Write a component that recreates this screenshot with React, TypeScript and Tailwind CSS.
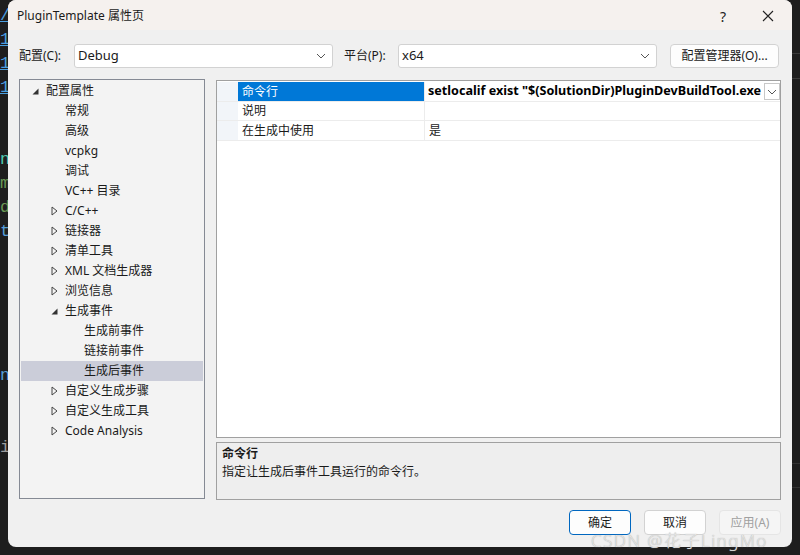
const font = "font-['Noto_Sans','Noto_Sans_CJK_SC',sans-serif]";

type Node = { label: string; level: 0 | 1 | 2; arrow?: "open" | "closed"; selected?: boolean };

const tree: Node[] = [
  { label: "配置属性", level: 0, arrow: "open" },
  { label: "常规", level: 1 },
  { label: "高级", level: 1 },
  { label: "vcpkg", level: 1 },
  { label: "调试", level: 1 },
  { label: "VC++ 目录", level: 1 },
  { label: "C/C++", level: 1, arrow: "closed" },
  { label: "链接器", level: 1, arrow: "closed" },
  { label: "清单工具", level: 1, arrow: "closed" },
  { label: "XML 文档生成器", level: 1, arrow: "closed" },
  { label: "浏览信息", level: 1, arrow: "closed" },
  { label: "生成事件", level: 1, arrow: "open" },
  { label: "生成前事件", level: 2 },
  { label: "链接前事件", level: 2 },
  { label: "生成后事件", level: 2, selected: true },
  { label: "自定义生成步骤", level: 1, arrow: "closed" },
  { label: "自定义生成工具", level: 1, arrow: "closed" },
  { label: "Code Analysis", level: 1, arrow: "closed" },
];

const indent = ["pl-[11px]", "pl-[30px]", "pl-[49px]"];

// bits of the code editor that show behind the dialog
const code: { ch: string; cls: string }[] = [
  { ch: "/", cls: "text-[#4a9fe0] underline" },
  { ch: "1", cls: "text-[#4a9fe0] underline" },
  { ch: "1", cls: "text-[#4a9fe0] underline" },
  { ch: "1", cls: "text-[#4a9fe0] underline" },
  { ch: " ", cls: "" },
  { ch: " ", cls: "" },
  { ch: "n", cls: "text-[#4ec9b0]" },
  { ch: "m", cls: "text-[#6a9955]" },
  { ch: "d", cls: "text-[#6a9955]" },
  { ch: "t", cls: "text-[#569cd6]" },
  { ch: " ", cls: "" },
  { ch: " ", cls: "" },
  { ch: " ", cls: "" },
  { ch: " ", cls: "" },
  { ch: " ", cls: "" },
  { ch: "n", cls: "text-[#569cd6]" },
  { ch: " ", cls: "" },
  { ch: " ", cls: "" },
  { ch: "i", cls: "text-[#9d9d9d]" },
];

function Arrow({ kind }: { kind?: "open" | "closed" }) {
  return (
    <span className="flex h-[20px] w-[14px] shrink-0 items-center">
      {kind === "open" && (
        <svg width="7" height="7" viewBox="0 0 7 7">
          <path d="M6.5 0.5 L6.5 6.5 L0.5 6.5 Z" fill="#333" />
        </svg>
      )}
      {kind === "closed" && (
        <svg width="7" height="10" viewBox="0 0 7 10">
          <path d="M1 1 L6 5 L1 9 Z" fill="none" stroke="#444" strokeWidth="1" />
        </svg>
      )}
    </span>
  );
}

function Chevron() {
  return (
    <svg width="10" height="6" viewBox="0 0 10 6">
      <path d="M1 1 L5 5 L9 1" fill="none" stroke="#555" strokeWidth="1" />
    </svg>
  );
}

function Combo({ value }: { value: string }) {
  return (
    <div className="flex h-[24px] w-[259px] items-center justify-between rounded-[3px] border border-[#d2d2d2] bg-white pl-[3px] pr-[6px] text-[13px] text-[#1a1a1a]">
      <span>{value}</span>
      <Chevron />
    </div>
  );
}

export default function App() {
  return (
    <div className={`relative flex h-[555px] w-[800px] overflow-hidden bg-[#1e1e1e] ${font}`}>
      <div className="flex w-[8px] shrink-0 flex-col overflow-hidden pt-[4px] font-['Liberation_Mono',monospace] text-[17px] leading-[24px]">
        {code.map((c, i) => (
          <span key={i} className={`h-[24px] whitespace-pre ${c.cls}`}>
            {c.ch}
          </span>
        ))}
      </div>

      <div className="flex h-[547px] w-[784px] shrink-0 flex-col overflow-hidden rounded-[8px] bg-[#f0f0f0] text-[12px] text-[#1a1a1a]">
        <div className="flex h-[30px] shrink-0 items-center bg-[#f5f1ee] pl-[9px] pt-[2px]">
          <span className="text-[12px]">PluginTemplate 属性页</span>
          <span className="ml-auto mr-[36px] text-[14px] text-[#222]">?</span>
          <svg width="12" height="12" viewBox="0 0 12 12" className="mr-[18px]">
            <path d="M1 1 L11 11 M11 1 L1 11" stroke="#222" strokeWidth="1.1" />
          </svg>
        </div>

        <div className="flex flex-1 flex-col px-[11px] pt-[13px]">
          <div className="flex h-[25px] items-center">
            <span className="w-[55px] text-[12px]">配置(C):</span>
            <Combo value="Debug" />
            <span className="ml-[11px] w-[54px]">平台(P):</span>
            <Combo value="x64" />
            <div className="ml-[13px] flex h-[24px] w-[109px] items-center justify-center rounded-[4px] border border-[#d2d2d2] bg-[#fdfdfd] text-[12px]">
              配置管理器(O)...
            </div>
          </div>

          <div className="mt-[11px] flex gap-[11px]">
            <div className="h-[420px] w-[186px] border border-[#858a94] bg-[#f3f3f3] px-px pt-px">
              {tree.map((n, i) => (
                <div
                  key={i}
                  className={`flex h-[20px] items-center ${indent[n.level]} ${n.selected ? "bg-[#cbcdd9]" : ""}`}
                >
                  <Arrow kind={n.arrow} />
                  <span className="whitespace-nowrap leading-[20px]">{n.label}</span>
                </div>
              ))}
            </div>

            <div className="flex flex-1 flex-col gap-[4px] pt-px">
              <div className="h-[358px] border border-[#a0a0a0] bg-white pt-px">
                <div className="flex h-[20px] border-b border-[#ececec]">
                  <div className="w-[21px] bg-[#f2f5f9]" />
                  <div className="flex w-[186px] items-center bg-[#0078d7] pl-[4px] text-white">命令行</div>
                  <div className="flex flex-1 items-center justify-between border-l border-[#ececec] pl-[3px]">
                    <span className="whitespace-nowrap text-[12.6px] font-bold text-black">
                      setlocalif exist "$(SolutionDir)PluginDevBuildTool.exe
                    </span>
                    <span className="flex h-[17px] w-[16px] shrink-0 items-center justify-center border border-[#c8c8c8] bg-white">
                      <Chevron />
                    </span>
                  </div>
                </div>
                <div className="flex h-[19px] border-b border-[#ececec]">
                  <div className="w-[21px] bg-[#f2f5f9]" />
                  <div className="flex w-[186px] items-center pl-[4px]">说明</div>
                  <div className="flex-1 border-l border-[#ececec]" />
                </div>
                <div className="flex h-[20px] border-b border-[#ececec]">
                  <div className="w-[21px] bg-[#f2f5f9]" />
                  <div className="flex w-[186px] items-center pl-[4px]">在生成中使用</div>
                  <div className="flex flex-1 items-center border-l border-[#ececec] pl-[4px]">是</div>
                </div>
              </div>

              <div className="flex h-[58px] flex-col border border-[#a0a0a0] bg-[#eeeeee] px-[5px] pt-[2px] leading-[18px]">
                <span className="font-bold">命令行</span>
                <span>指定让生成后事件工具运行的命令行。</span>
              </div>
            </div>
          </div>

          <div className="mt-[10px] flex justify-end gap-[13px]">
            <div className="flex h-[25px] w-[62px] items-center justify-center rounded-[4px] border border-[#0067c0] bg-[#fdfdfd]">
              确定
            </div>
            <div className="flex h-[25px] w-[62px] items-center justify-center rounded-[4px] border border-[#d2d2d2] bg-[#fdfdfd]">
              取消
            </div>
            <div className="flex h-[25px] w-[62px] items-center justify-center rounded-[4px] border border-[#e5e5e5] bg-[#f5f5f5] text-[#a0a0a0]">
              应用(A)
            </div>
          </div>
        </div>
      </div>

      <div className="flex w-[8px] shrink-0 flex-col">
        <div className="h-[53px]" />
        <div className="h-px bg-[#3a3a3a]" />
        <div className="h-[24px]" />
        <div className="h-px bg-[#3a3a3a]" />
        <div className="h-[384px]" />
        <div className="h-px bg-[#333]" />
        <div className="h-[23px]" />
        <div className="h-px bg-[#333]" />
      </div>

      <span className="pointer-events-none absolute left-[591px] top-[528px] text-[17px] font-light tracking-[1.5px] text-[#e6e6e6] [text-shadow:0_0_1px_#999]">
        CSDN @花子LingMo
      </span>
    </div>
  );
}
